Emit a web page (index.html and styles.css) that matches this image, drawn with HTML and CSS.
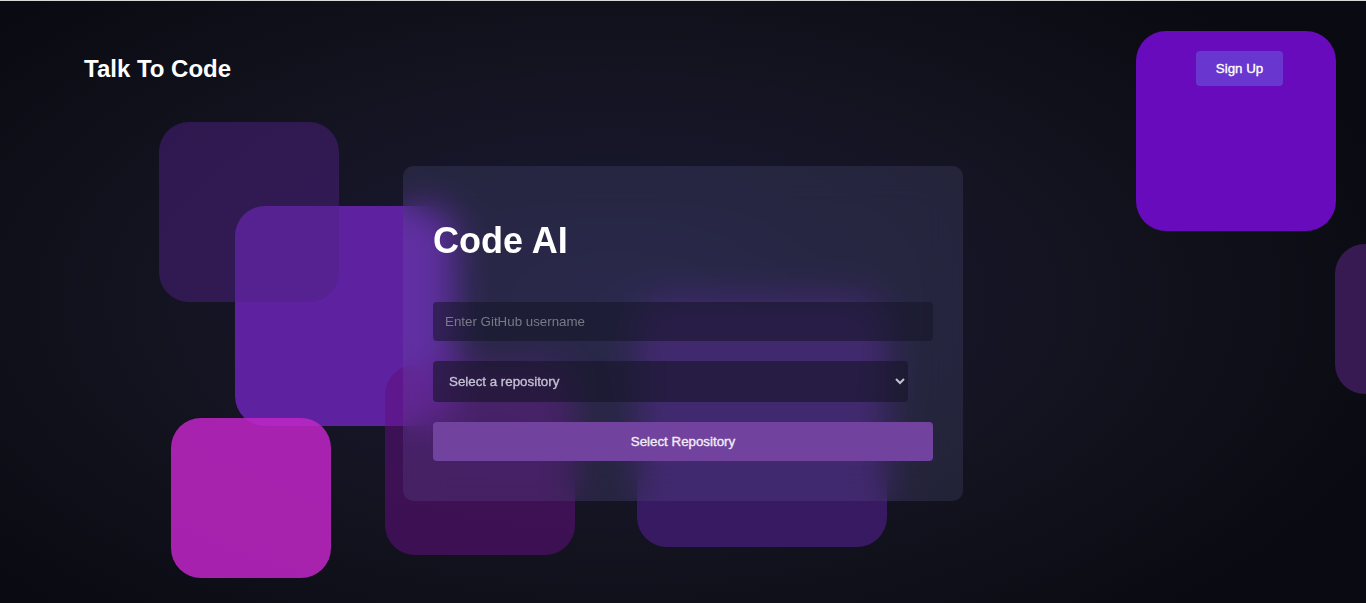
FILE: index.html
```html
<!DOCTYPE html>
<html lang="en">
<head>
<meta charset="utf-8">
<title>Talk To Code</title>
<link rel="stylesheet" href="styles.css">
</head>
<body>
<div class="page">
  <div class="shapes" aria-hidden="true">
    <div class="shape s2"></div>
    <div class="shape s1"></div>
    <div class="shape s3"></div>
    <div class="shape s4"></div>
    <div class="shape s5"></div>
    <div class="shape s6"></div>
    <div class="shape s7"></div>
  </div>
  <header class="header">
    <div class="brand">Talk To Code</div>
    <button class="signup" type="button">Sign Up</button>
  </header>
  <main class="main">
    <section class="card">
      <h1 class="title">Code AI</h1>
      <form class="form">
        <input class="field" type="text" placeholder="Enter GitHub username">
        <select class="select">
          <option>Select a repository</option>
        </select>
        <button class="primary" type="button">Select Repository</button>
      </form>
    </section>
  </main>
</div>
</body>
</html>
```
FILE: styles.css
```css
* { box-sizing: border-box; }
html, body { margin: 0; height: 100%; }
body {
  font-family: "Liberation Sans", Arial, sans-serif;
  color: #fff;
  background: radial-gradient(ellipse 60% 70% at 45% 50%, #1b1a38 0%, #13131f 60%, #0a0a12 100%);
  border-top: 1px solid #d9d9d9;
  overflow: hidden;
}
.page { position: relative; height: 602px; }
.shapes { position: absolute; inset: 0; }
.shape { position: absolute; }
.s1 { left: 159px; top: 121px; width: 180px; height: 180px; border-radius: 30px; background: rgba(78, 32, 130, 0.5); }
.s2 { left: 235px; top: 205px; width: 220px; height: 220px; border-radius: 30px; background: #5e22a1; }
.s3 { left: 171px; top: 417px; width: 160px; height: 160px; border-radius: 30px; background: rgba(190, 38, 196, 0.87); }
.s4 { left: 385px; top: 364px; width: 190px; height: 190px; border-radius: 30px; background: rgba(95, 15, 125, 0.55); }
.s5 { left: 637px; top: 296px; width: 250px; height: 250px; border-radius: 30px; background: #381a62; }
.s6 { left: 1136px; top: 30px; width: 200px; height: 200px; border-radius: 30px; background: #680bbd; }
.s7 { left: 1335px; top: 243px; width: 150px; height: 150px; border-radius: 30px; background: #371a52; }

.header {
  position: relative;
  display: flex;
  justify-content: space-between;
  align-items: center;
  padding: 50px 83px 0 84px;
}
.brand { font-size: 24px; font-weight: 700; line-height: 28px; }
.signup {
  font-family: "Liberation Sans", Arial, sans-serif;
  font-size: 13.33px;
  font-weight: 400;
  -webkit-text-stroke: 0.35px #fff;
  color: #fff;
  background: #6936cf;
  border: 0;
  border-radius: 4px;
  width: 87px;
  height: 35px;
  padding: 0;
}
.main {
  position: relative;
  padding-left: 403px;
  padding-top: 80px;
}
.card {
  width: 560px;
  height: 335px;
  padding: 30px;
  border-radius: 10px;
  background: rgba(110, 110, 170, 0.18);
  backdrop-filter: blur(18px);
  -webkit-backdrop-filter: blur(18px);
}
.title {
  margin: 24px 0 41px;
  font-size: 36px;
  font-weight: 700;
  line-height: 41px;
}
.form { display: flex; flex-direction: column; gap: 20px; }
.field {
  width: 100%;
  height: 39px;
  padding: 0 12px;
  border: 0;
  border-radius: 4px;
  background: rgba(20, 20, 38, 0.55);
  color: #fff;
  font-family: "Liberation Sans", Arial, sans-serif;
  font-size: 13.33px;
  outline: none;
}
.field::placeholder { color: #7a7a88; }
.select {
  width: 475px;
  height: 41px;
  padding: 0 8px 0 12px;
  border: 0;
  border-radius: 4px;
  background: rgba(22, 20, 40, 0.6);
  color: #c4c0d4;
  font-family: "Liberation Sans", Arial, sans-serif;
  font-size: 13.33px;
  font-weight: 400;
  -webkit-text-stroke: 0.35px #c4c0d4;
  outline: none;
}
.primary {
  width: 100%;
  height: 39px;
  border: 0;
  border-radius: 4px;
  background: #71439e;
  color: #f2ecf8;
  font-family: "Liberation Sans", Arial, sans-serif;
  font-size: 13.33px;
  font-weight: 400;
  -webkit-text-stroke: 0.35px #f2ecf8;
}
```
